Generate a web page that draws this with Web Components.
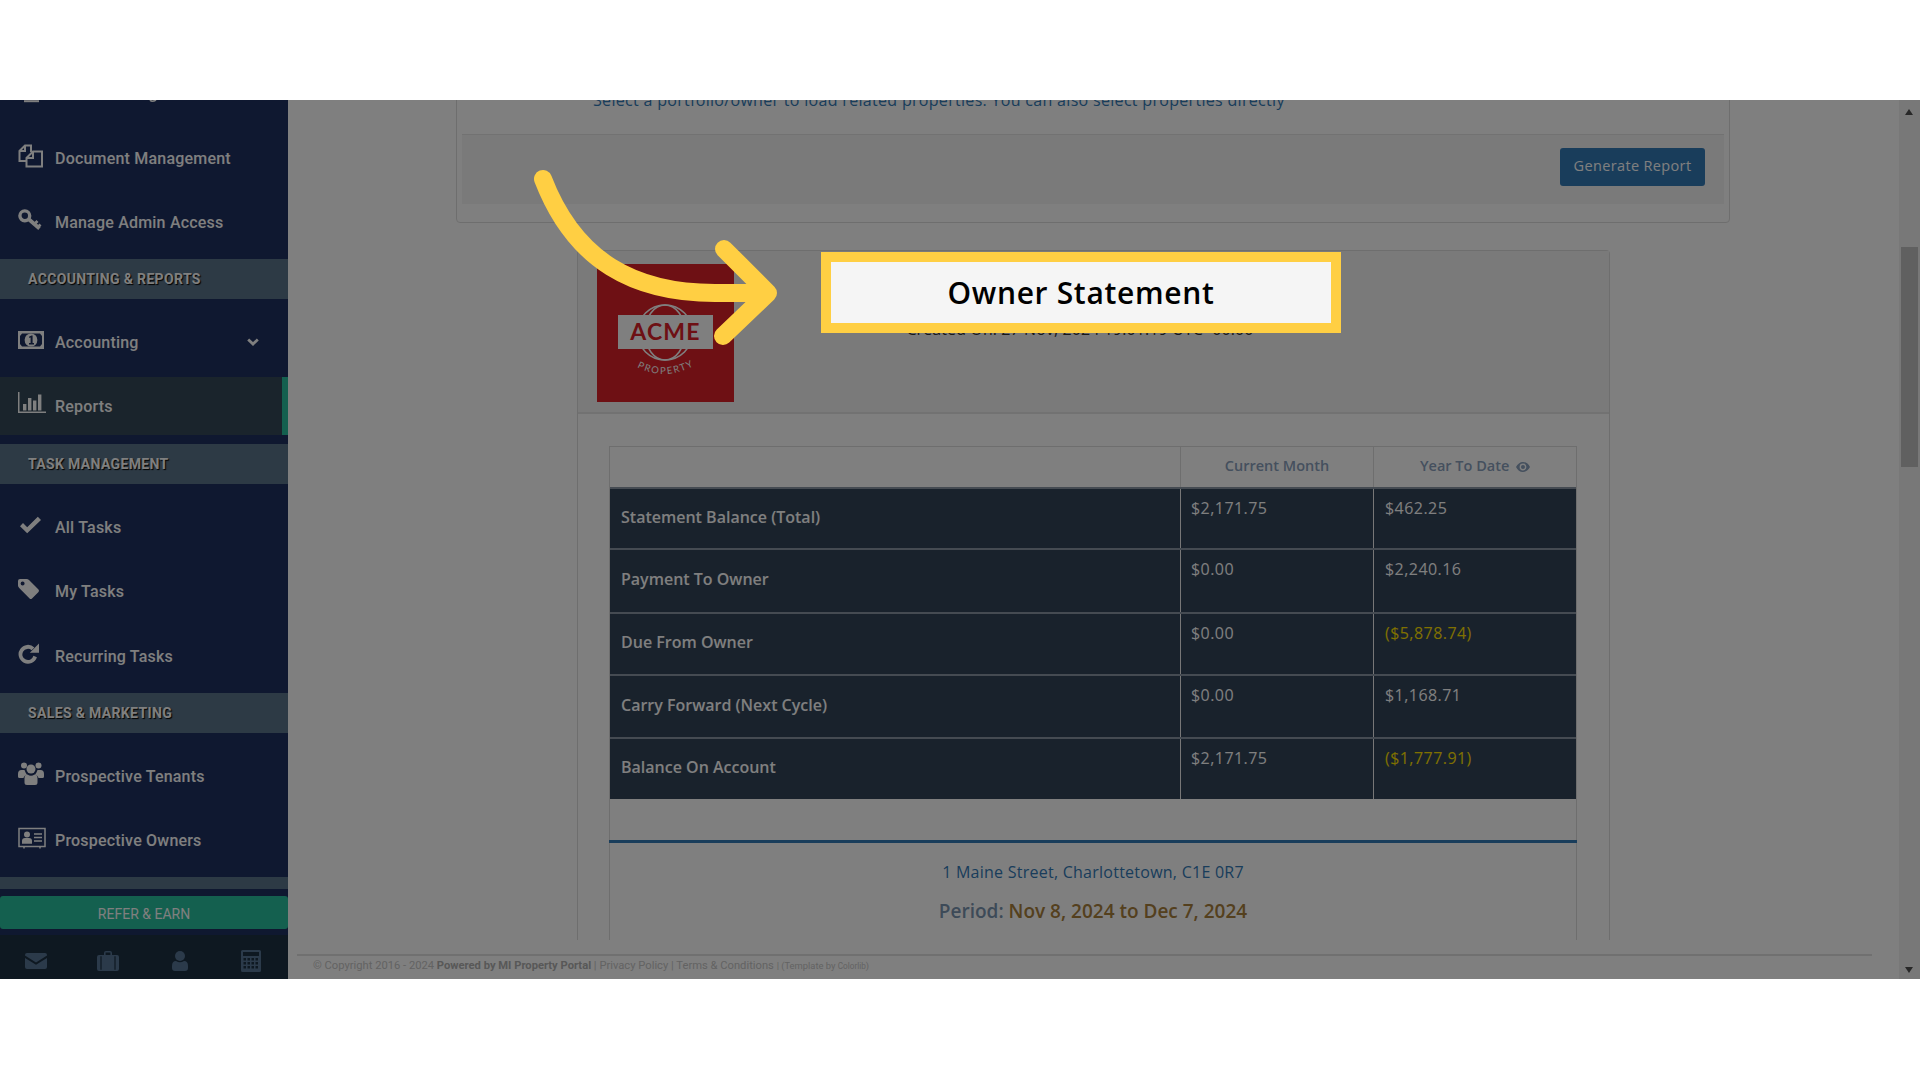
<!DOCTYPE html>
<html>
<head>
<meta charset="utf-8">
<title>Owner Statement</title>
<style>
  html, body { margin: 0; background: #fff; }
  body { width: 1920px; height: 1080px; overflow: hidden; font-family: "Open Sans", sans-serif; }
</style>
</head>
<body>
<tour-frame>
  <side-nav slot="side">
    <nav-item icon="files" style="margin-top:26px">Document Management</nav-item>
    <nav-item icon="key">Manage Admin Access</nav-item>
    <nav-section style="margin-top:5px">ACCOUNTING &amp; REPORTS</nav-section>
    <nav-item icon="money" chevron>Accounting</nav-item>
    <nav-item icon="bars" active style="margin-top:3px">Reports</nav-item>
    <nav-section style="margin-top:9px">TASK MANAGEMENT</nav-section>
    <nav-item icon="check">All Tasks</nav-item>
    <nav-item icon="tag">My Tasks</nav-item>
    <nav-item icon="repeat" style="margin-top:1px">Recurring Tasks</nav-item>
    <nav-section style="margin-top:5px">SALES &amp; MARKETING</nav-section>
    <nav-item icon="users">Prospective Tenants</nav-item>
    <nav-item icon="card">Prospective Owners</nav-item>
    <nav-section style="margin-top:5px;height:12px;margin-bottom:0"></nav-section>
  </side-nav>
  <report-main slot="main">
    <filter-card></filter-card>
    <statement-card>
      <statement-row slot="rows" height="61"><span slot="label">Statement Balance (Total)</span><span slot="month">$2,171.75</span><span slot="year">$462.25</span></statement-row>
      <statement-row slot="rows" height="64"><span slot="label">Payment To Owner</span><span slot="month">$0.00</span><span slot="year">$2,240.16</span></statement-row>
      <statement-row slot="rows" height="62"><span slot="label">Due From Owner</span><span slot="month">$0.00</span><span slot="year" style="color:#ffe000">($5,878.74)</span></statement-row>
      <statement-row slot="rows" height="63"><span slot="label">Carry Forward (Next Cycle)</span><span slot="month">$0.00</span><span slot="year">$1,168.71</span></statement-row>
      <statement-row slot="rows" height="62"><span slot="label">Balance On Account</span><span slot="month">$2,171.75</span><span slot="year" style="color:#ffe000">($1,777.91)</span></statement-row>
    </statement-card>
  </report-main>
  <step-callout slot="over">Owner Statement</step-callout>
</tour-frame>

<script>
// icons are drawn in a 28x24 box, x=0 is the left edge of the sidebar icon column
const ICONS = {
  files: `<g fill="none" stroke="currentColor" stroke-width="2"><path d="M13 8V1.5H7L1.5 7V17H8.5"/><path d="M7 1.5V7H1.5"/><path d="M15 7.5L8.5 14V22.5H24V7.5Z"/><path d="M15 7.5V14H8.5"/></g>`,
  key: `<g fill="none" stroke="currentColor"><circle cx="6.8" cy="7.8" r="4.9" stroke-width="3.4"/><path d="M10.5 11L21.5 20.5" stroke-width="3.8"/><path d="M16.5 16L19.5 13M20 19L22.5 16.5" stroke-width="2.8"/></g>`,
  money: `<rect y="3" width="26" height="18" fill="currentColor"/><path fill="#1e3060" d="M4 5.5H22L24 8V16L22 18.5H4L2 16V8Z"/><ellipse cx="13" cy="12" rx="6.4" ry="6.6" fill="currentColor"/><path fill="#1e3060" d="M11.2 8.6L13.6 7.6H14.6V15H16V16.4H11V15H12.6V9.6L11.2 10Z"/>`,
  bars: `<g fill="currentColor"><path d="M0 0H1.5V19.5H28V21H0Z"/><rect x="5" y="12" width="3.4" height="6.5"/><rect x="10" y="6" width="3.4" height="12.5"/><rect x="15" y="8.5" width="3.4" height="10"/><rect x="20" y="2.5" width="3.4" height="16"/></g>`,
  check: `<path fill="currentColor" d="M2 13.2L5 10L9.2 14.2L19.8 3.8L23 7L9.2 20.3Z"/>`,
  tag: `<path fill="currentColor" fill-rule="evenodd" d="M0 4Q0 2 2 2H8.5Q10 2 11 3L20.5 12.6Q21.5 13.8 20.5 15L14 21.4Q12.8 22.4 11.6 21.4L1.2 11Q0 9.8 0 8.6ZM4.6 4.6A2 2 0 1 0 4.61 8.6A2 2 0 1 0 4.6 4.6Z"/>`,
  repeat: `<g fill="currentColor"><path d="M16.4 5.4A9.4 9.4 0 1 0 18.9 15.2L15.4 13.8A5.6 5.6 0 1 1 13.6 8.2Z"/><path d="M21 1.6V10.8H11.8Z"/></g>`,
  users: `<g fill="currentColor"><circle cx="6" cy="3.5" r="3"/><circle cx="20.5" cy="3.5" r="3"/><circle cx="13" cy="7" r="4.5"/><path d="M0 12Q0 8 3.5 8H6.5Q7.5 11 9 12.5Q6 13.5 5.4 16H1.5Q0 16 0 14.5Z"/><path d="M26 12Q26 8 22.5 8H19.5Q18.5 11 17 12.5Q20 13.5 20.6 16H24.5Q26 16 26 14.5Z"/><path d="M6.5 16.5Q6.5 12.5 9.5 12.5Q13 15 16.5 12.5Q19.5 12.5 19.5 16.5V20.5Q19.5 23 17 23H9Q6.5 23 6.5 20.5Z"/></g>`,
  card: `<g fill="none" stroke="currentColor" stroke-width="1.5"><path d="M1 2.5H27V20.5H1Z"/><path d="M16 8H24M16 11.5H24M16 15H24" stroke-width="1.6"/><path d="M6 20.5V22.5M22 20.5V22.5" stroke-width="1.5"/></g><g fill="currentColor"><circle cx="9" cy="8.5" r="3"/><path d="M4 17.8V15Q4 12 7 12H11Q14 12 14 15V17.8Z"/></g>`
}

const FOOT_ICONS = [
  `<svg width="22" height="16" viewBox="0 0 22 16"><path fill="currentColor" d="M2 0H20Q22 0 22 2V2.6L11 9.4L0 2.6V2Q0 0 2 0ZM0 5L11 11.8L22 5V14Q22 16 20 16H2Q0 16 0 14Z"/></svg>`,
  `<svg width="22" height="20" viewBox="0 0 22 20"><path fill="currentColor" d="M7 4V2Q7 0 9 0H13Q15 0 15 2V4H20Q22 4 22 6V18Q22 20 20 20H2Q0 20 0 18V6Q0 4 2 4ZM8.6 4H13.4V1.6H8.6ZM3.4 5.2V18.8H4.6V5.2ZM17.4 5.2V18.8H18.6V5.2Z" fill-rule="evenodd"/></svg>`,
  `<svg width="16" height="20" viewBox="0 0 16 20"><circle cx="8" cy="5" r="5" fill="currentColor"/><path fill="currentColor" d="M0 15Q0 10 4 10Q8 12.5 12 10Q16 10 16 15V17Q16 20 13 20H3Q0 20 0 17Z"/></svg>`,
  `<svg width="20" height="22" viewBox="0 0 20 22" style="margin-right:2px"><path fill="currentColor" fill-rule="evenodd" d="M1.5 0H18.5Q20 0 20 1.5V20.5Q20 22 18.5 22H1.5Q0 22 0 20.5V1.5Q0 0 1.5 0ZM2 2V6H18V2ZM2.5 8V10.5H5V8ZM6.5 8V10.5H9V8ZM10.5 8V10.5H13V8ZM14.5 8V10.5H17V8ZM2.5 12V14.5H5V12ZM6.5 12V14.5H9V12ZM10.5 12V14.5H13V12ZM14.5 12V14.5H17V12ZM2.5 16V18.5H5V16ZM6.5 16V18.5H9V16ZM10.5 16V18.5H13V16ZM14.5 16V18.5H17V16Z"/></svg>`
]

class TourFrame extends HTMLElement {
  constructor() {
    super()
    this.attachShadow({ mode: 'open' }).innerHTML = `
      <style>
        :host { display: block; position: relative; width: 1920px; height: 1080px; background: #fff; }
        .app { position: absolute; left: 0; right: 0; top: 100px; height: 879px; display: flex; overflow: hidden; background: #fff; }
        /* grey layer of the walkthrough, everything below it is dimmed */
        .dim { position: absolute; left: 0; right: 0; top: 100px; height: 879px; background: rgba(0, 0, 0, .5); }
      </style>
      <div class="app">
        <slot name="side"></slot>
        <slot name="main"></slot>
      </div>
      <div class="dim"></div>
      <slot name="over"></slot>`
  }
}

class SideNav extends HTMLElement {
  constructor() {
    super()
    this.attachShadow({ mode: 'open' }).innerHTML = `
      <style>
        :host { display: flex; flex-direction: column; width: 288px; height: 879px; flex-shrink: 0; background: #1e3060; color: #fff; font-family: Roboto, sans-serif; position: relative; }
        .list { height: 789px; overflow: hidden; flex-shrink: 0; }
        .clipped { position: absolute; top: 0; left: 0; }
        .refer { height: 33px; padding-top: 2px; box-sizing: border-box; margin-top: 7px; background: #28c09e; border-radius: 3px; display: flex; align-items: center; justify-content: center; font-size: 14px; flex-shrink: 0; }
        .foot { margin-top: 6px; height: 44px; background: #1c3042; color: #567494; display: grid; grid-template-columns: repeat(4, 72px); align-items: center; justify-items: center; }
        .foot svg { display: block; margin-top: 8px; }
      </style>
      <svg class="clipped" width="170" height="4" viewBox="0 0 170 4"><path d="M24 1.2H39" stroke="#fff" stroke-width="2" fill="none"/><path d="M150 0Q152 2.5 156 0" stroke="#fff" stroke-width="1.6" fill="none"/></svg>
      <div class="list"><slot></slot></div>
      <div class="refer">REFER &amp; EARN</div>
      <div class="foot">${FOOT_ICONS.join('')}</div>`
  }
}

class NavItem extends HTMLElement {
  connectedCallback() {
    const active = this.hasAttribute('active')
    this.attachShadow({ mode: 'open' }).innerHTML = `
      <style>
        :host { display: flex; align-items: center; height: ${active ? 58 : 64}px; padding-left: 18px; box-sizing: border-box; font-size: 16px; font-weight: 500; letter-spacing: .2px; position: relative; ${active ? 'background: #344858;' : ''} }
        .ic { display: block; width: 28px; height: 24px; margin-right: 9px; margin-top: -5px; flex-shrink: 0; }
        .bar { position: absolute; right: 0; top: 0; bottom: 0; width: 6px; background: #28c09e; }
        .chev { position: absolute; left: 247px; top: 28px; }
      </style>
      <svg class="ic" viewBox="0 0 28 24">${ICONS[this.getAttribute('icon')] || ''}</svg>
      <slot></slot>
      ${active ? '<span class="bar"></span>' : ''}
      ${this.hasAttribute('chevron') ? '<svg class="chev" width="12" height="8" viewBox="0 0 12 8"><path d="M1.2 1.5L6 6L10.8 1.5" fill="none" stroke="currentColor" stroke-width="2.8"/></svg>' : ''}`
  }
}

class NavSection extends HTMLElement {
  constructor() {
    super()
    this.attachShadow({ mode: 'open' }).innerHTML = `
      <style>
        :host { display: flex; align-items: center; height: 40px; margin-bottom: 11px; padding: 0 0 0 28px; box-sizing: border-box; background: #5a748a; font-size: 14px; font-weight: 700; letter-spacing: .35px; text-shadow: 1px 1px 1px #000; }
      </style>
      <slot></slot>`
  }
}

class ReportMain extends HTMLElement {
  constructor() {
    super()
    this.attachShadow({ mode: 'open' }).innerHTML = `
      <style>
        :host { display: flex; flex: 1; height: 879px; min-width: 0; }
        .col { flex: 1; min-width: 0; display: flex; flex-direction: column; }
        .scroll { height: 840px; overflow: hidden; flex-shrink: 0; }
        .rule { height: 2px; background: #e0e0e0; margin: 14px 27px 0 9px; }
        .copy { padding: 2px 0 0 25px; font: 11.2px/16px Roboto, sans-serif; color: #c6c6c6; white-space: nowrap; }
        .copy b { color: #b0b0b0; font-weight: 700; }
        .copy small { font-size: 9.4px; }
        .copy small small { font-size: 8.2px; }
        .track { width: 21px; flex-shrink: 0; background: #f1f1f1; position: relative; }
        .thumb { position: absolute; left: 2px; right: 2px; top: 147px; height: 220px; background: #c1c1c1; }
        .up, .down { position: absolute; left: 6px; width: 0; height: 0; border-left: 4px solid transparent; border-right: 4px solid transparent; }
        .up { top: 9px; border-bottom: 6px solid #505050; }
        .down { bottom: 6px; border-top: 6px solid #505050; }
      </style>
      <div class="col">
        <div class="scroll"><slot></slot></div>
        <div class="rule"></div>
        <div class="copy">© Copyright 2016 - 2024 <b>Powered by MI Property Portal</b> | Privacy Policy | Terms &amp; Conditions <small>| (Template by <small>Colorlib</small>)</small></div>
      </div>
      <div class="track"><i class="up"></i><i class="thumb"></i><i class="down"></i></div>`
  }
}

class FilterCard extends HTMLElement {
  constructor() {
    super()
    this.attachShadow({ mode: 'open' }).innerHTML = `
      <style>
        :host { display: block; width: 1274px; height: 163px; margin: -40px 0 0 168px; box-sizing: border-box; padding: 27px 5px 0; border: 1px solid #ddd; border-radius: 4px; }
        .hint { margin-left: 131px; height: 24px; font-size: 16px; line-height: 24px; letter-spacing: .31px; color: #337ab7; white-space: nowrap; }
        .panel { margin-top: 22px; height: 70px; background: #f5f5f5; border-top: 1px solid #e4e4e4; box-sizing: border-box; display: flex; justify-content: flex-end; padding: 13px 19px 0 0; }
        button { width: 145px; height: 38px; border: 0; border-radius: 3px; background: #337ab7; color: #fff; font: 14.5px "Open Sans", sans-serif; letter-spacing: .35px; padding: 0 0 3px; }
      </style>
      <div class="hint">Select a portfolio/owner to load related properties. You can also select properties directly</div>
      <div class="panel"><button>Generate Report</button></div>`
  }
}

class StatementCard extends HTMLElement {
  constructor() {
    super()
    this.attachShadow({ mode: 'open' }).innerHTML = `
      <style>
        :host { display: block; width: 1033px; margin: 27px 0 0 289px; box-sizing: border-box; border: 1px solid #ddd; border-radius: 4px 4px 0 0; border-bottom: 0; height: 700px; }
        .head { height: 163px; background: #f5f5f5; border-bottom: 2px solid #e4e4e4; box-sizing: border-box; padding: 13px 0 0 19px; display: flex; align-items: flex-start; }
        .logo { display: block; width: 137px; height: 138px; flex-shrink: 0; }
        .info { width: 692px; margin-top: 53px; text-align: center; font-size: 16px; line-height: 24px; letter-spacing: .1px; color: #333; white-space: nowrap; }
        .body { padding: 32px 0 0 31px; }
        .wrap { width: 968px; box-sizing: border-box; border: 1px solid #ddd; border-bottom: 0; margin-left: 0; height: 494px; }
        .heads { display: grid; grid-template-columns: 570px 193px 1fr; height: 40px; text-align: center; font-size: 14.5px; font-weight: 600; color: #8aa0bc; line-height: 37px; }
        .heads div + div { border-left: 1px solid #ddd; }
        .eye { vertical-align: -1px; margin-left: 3px; }
        .blue { height: 3px; background: #337ab7; margin: 41px -1px 0; }
        .addr { margin-top: 17px; text-align: center; font-size: 16px; line-height: 24px; color: #337ab7; letter-spacing: .25px; }
        .period { margin-top: 14px; text-align: center; font-size: 19px; line-height: 26px; font-weight: 600; color: #7a94b0; }
        .period span { color: #a8803c; }
      </style>
      <div class="head">
        <svg class="logo" viewBox="597 263 137 138">
          <rect x="597" y="263" width="137" height="138" fill="#dc2028"/>
          <g fill="none" stroke="#fff" stroke-width="1.6">
            <circle cx="665" cy="331.5" r="27.5"/>
            <ellipse cx="665" cy="331.5" rx="20" ry="27.5"/>
          </g>
          <rect x="618" y="314" width="95" height="34" fill="#fff"/>
          <text x="665.5" y="338.5" text-anchor="middle" font-family="Lato, sans-serif" font-weight="700" font-size="23" letter-spacing="1.2" fill="#dc2028">ACME</text>
          <path id="arc" d="M637 366Q665 381 695 364" fill="none"/>
          <text font-family="Lato, sans-serif" font-size="9.5" letter-spacing="1.6" fill="#fff"><textPath href="#arc">PROPERTY</textPath></text>
        </svg>
        <div class="info">Created On: 27 Nov, 2024 19:01:19 UTC+00:00</div>
      </div>
      <div class="body">
        <div class="wrap">
          <div class="heads">
            <div></div>
            <div>Current Month</div>
            <div>Year To Date <svg class="eye" width="14" height="10" viewBox="0 0 14 10"><path fill="currentColor" fill-rule="evenodd" d="M7 0C10 0 12.5 2 14 5C12.5 8 10 10 7 10C4 10 1.5 8 0 5C1.5 2 4 0 7 0ZM7 1.6A3.4 3.4 0 1 0 7.01 8.4A3.4 3.4 0 1 0 7 1.6ZM7 3A2 2 0 1 1 6.99 7A2 2 0 1 1 7 3Z"/></svg></div>
          </div>
          <slot name="rows"></slot>
          <div class="blue"></div>
          <div class="addr">1 Maine Street, Charlottetown, C1E 0R7</div>
          <div class="period">Period: <span>Nov 8, 2024 to Dec 7, 2024</span></div>
        </div>
      </div>`
  }
}

class StatementRow extends HTMLElement {
  connectedCallback() {
    this.attachShadow({ mode: 'open' }).innerHTML = `
      <style>
        :host { display: grid; grid-template-columns: 570px 193px 1fr; height: ${this.getAttribute('height')}px; box-sizing: border-box; background: #324458; color: #fff; border-top: 2px solid #8a96a4; font-size: 16px; line-height: 24px; white-space: nowrap; }
        .label { display: flex; align-items: center; padding: 0 0 4px 11px; font-weight: 600; }
        .val { border-left: 1px solid #eee; padding: 7px 0 0 10px; letter-spacing: .45px; }
        .val:last-child { padding-left: 11px; }
      </style>
      <div class="label"><slot name="label"></slot></div>
      <div class="val"><slot name="month"></slot></div>
      <div class="val"><slot name="year"></slot></div>`
  }
}

class StepCallout extends HTMLElement {
  constructor() {
    super()
    this.attachShadow({ mode: 'open' }).innerHTML = `
      <style>
        :host { position: absolute; left: 0; top: 0; width: 1920px; height: 1080px; display: block; pointer-events: none; }
        svg { position: absolute; left: 0; top: 0; }
        .box { position: absolute; left: 821px; top: 252px; width: 520px; height: 81px; box-sizing: border-box; border: 10px solid #ffcf43; background: #f5f5f5; display: flex; align-items: center; justify-content: center; font: 600 30px "Open Sans", sans-serif; color: #000; letter-spacing: .67px; }
      </style>
      <svg width="1920" height="1080"><path d="M543 179C575 262 635 293 715 293H762M724 249L768 293L723 336" fill="none" stroke="#ffcf43" stroke-width="18" stroke-linecap="round" stroke-linejoin="round"/></svg>
      <div class="box"><slot></slot></div>`
  }
}

customElements.define('tour-frame', TourFrame)
customElements.define('side-nav', SideNav)
customElements.define('nav-item', NavItem)
customElements.define('nav-section', NavSection)
customElements.define('report-main', ReportMain)
customElements.define('filter-card', FilterCard)
customElements.define('statement-card', StatementCard)
customElements.define('statement-row', StatementRow)
customElements.define('step-callout', StepCallout)
</script>
</body>
</html>
